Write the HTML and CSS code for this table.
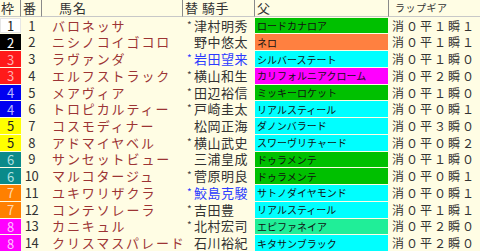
FILE: index.html
```html
<!DOCTYPE html>
<html lang="ja">
<head>
<meta charset="utf-8">
<link rel="stylesheet" href="styles.css">
</head>
<body>
<div class="table">
  <div class="row head">
    <div class="h waku-h">枠</div>
    <div class="h num-h">番</div>
    <div class="h name-h">馬名</div>
    <div class="h jockey-h">替&nbsp;騎手</div>
    <div class="h sire-h">父</div>
    <div class="h gear-h">ラップギア</div>
  </div>

  <div class="row">
    <div class="waku w1">1</div><div class="num">1</div><div class="name">バロネッサ</div>
    <div class="jockey"><span class="mark">*</span>津村明秀</div>
    <div class="sire s-green">ロードカナロア</div><div class="gear">消０平１瞬１</div>
  </div>
  <div class="row">
    <div class="waku w2">2</div><div class="num">2</div><div class="name">ニシノコイゴコロ</div>
    <div class="jockey"><span class="mark"></span>野中悠太</div>
    <div class="sire s-orange">ネロ</div><div class="gear">消０平１瞬１</div>
  </div>
  <div class="row">
    <div class="waku w3">3</div><div class="num">3</div><div class="name">ラヴァンダ</div>
    <div class="jockey blue"><span class="mark">*</span>岩田望来</div>
    <div class="sire s-cyan">シルバーステート</div><div class="gear">消０平１瞬０</div>
  </div>
  <div class="row">
    <div class="waku w3">3</div><div class="num">4</div><div class="name">エルフストラック</div>
    <div class="jockey"><span class="mark">*</span>横山和生</div>
    <div class="sire s-magenta">カリフォルニアクローム</div><div class="gear">消０平２瞬０</div>
  </div>
  <div class="row">
    <div class="waku w4">4</div><div class="num">5</div><div class="name">メアヴィア</div>
    <div class="jockey"><span class="mark">*</span>田辺裕信</div>
    <div class="sire s-green">ミッキーロケット</div><div class="gear">消０平１瞬０</div>
  </div>
  <div class="row">
    <div class="waku w4">4</div><div class="num">6</div><div class="name">トロピカルティー</div>
    <div class="jockey"><span class="mark">*</span>戸崎圭太</div>
    <div class="sire s-cyan">リアルスティール</div><div class="gear">消０平０瞬１</div>
  </div>
  <div class="row">
    <div class="waku w5">5</div><div class="num">7</div><div class="name">コスモディナー</div>
    <div class="jockey"><span class="mark"></span>松岡正海</div>
    <div class="sire s-cyan">ダノンバラード</div><div class="gear">消０平３瞬０</div>
  </div>
  <div class="row">
    <div class="waku w5">5</div><div class="num">8</div><div class="name">アドマイヤベル</div>
    <div class="jockey"><span class="mark">*</span>横山武史</div>
    <div class="sire s-cyan">スワーヴリチャード</div><div class="gear">消０平０瞬２</div>
  </div>
  <div class="row">
    <div class="waku w6">6</div><div class="num">9</div><div class="name">サンセットビュー</div>
    <div class="jockey"><span class="mark"></span>三浦皇成</div>
    <div class="sire s-green">ドゥラメンテ</div><div class="gear">消０平１瞬０</div>
  </div>
  <div class="row">
    <div class="waku w6">6</div><div class="num">10</div><div class="name">マルコタージュ</div>
    <div class="jockey"><span class="mark">*</span>菅原明良</div>
    <div class="sire s-green">ドゥラメンテ</div><div class="gear">消０平０瞬１</div>
  </div>
  <div class="row">
    <div class="waku w7">7</div><div class="num">11</div><div class="name">ユキワリザクラ</div>
    <div class="jockey blue"><span class="mark">*</span>鮫島克駿</div>
    <div class="sire s-cyan">サトノダイヤモンド</div><div class="gear">消０平０瞬１</div>
  </div>
  <div class="row">
    <div class="waku w7">7</div><div class="num">12</div><div class="name">コンテソレーラ</div>
    <div class="jockey"><span class="mark">*</span>吉田豊</div>
    <div class="sire s-cyan">リアルスティール</div><div class="gear">消０平１瞬１</div>
  </div>
  <div class="row">
    <div class="waku w8">8</div><div class="num">13</div><div class="name">カニキュル</div>
    <div class="jockey"><span class="mark">*</span>北村宏司</div>
    <div class="sire s-sea">エピファネイア</div><div class="gear">消０平２瞬０</div>
  </div>
  <div class="row">
    <div class="waku w8">8</div><div class="num">14</div><div class="name">クリスマスパレード</div>
    <div class="jockey"><span class="mark"></span>石川裕紀</div>
    <div class="sire s-cyan">キタサンブラック</div><div class="gear">消０平２瞬０</div>
  </div>
</div>
</body>
</html>
```

FILE: styles.css
```css
html, body {
  margin: 0;
  padding: 0;
  background: #fffde4;
}
body {
  width: 480px;
  height: 251px;
  overflow: hidden;
  font-family: "Noto Sans CJK JP", "Noto Sans", sans-serif;
  color: #333;
}
.table {
  display: grid;
  grid-template-columns: 21px 21px 141px 72px 134px 91px;
  grid-template-rows: repeat(15, 1fr);
  height: 251px;
  width: 480px;
}
.row {
  display: contents;
}
.row > div {
  display: flex;
  align-items: center;
  white-space: nowrap;
  line-height: 15px;
  min-width: 0;
}
.h {
  font-size: 13px;
  color: #333;
  border-right: 1px solid #8a8a8a;
  border-bottom: 1px solid #c8c8c8;
  padding-left: 1px;
}
.num-h { padding-left: 2px; }
.name-h { padding-left: 17px; letter-spacing: 1px; }
.jockey-h { padding-left: 2px; letter-spacing: 0.5px; }
.sire-h { padding-left: 2px; }
.gear-h { font-size: 10px; padding-left: 6px; border-right: none; letter-spacing: 0.5px; }

.waku {
  justify-content: center;
  font-size: 13px;
  border-top: 1px solid #fffde4;
}
.w1 { background: #fff; color: #222; box-shadow: inset 0 0 0 1px #e6e6e6; }
.w2 { background: #000; color: #fff; }
.w3 { background: #ff1a1a; color: #ffb0b0; }
.w4 { background: #0000f0; color: #b8b8ff; }
.w5 { background: #ffff00; color: #222; }
.w6 { background: #0a8a8a; color: #b0e0e0; }
.w7 { background: #ff8000; color: #ffd8b0; }
.w8 { background: #ff00ff; color: #ffc0ff; }

.num {
  justify-content: center;
  font-size: 13px;
  color: #333;
  letter-spacing: -0.5px;
}
.name {
  font-size: 13px;
  letter-spacing: 1.9px;
  color: #9c3434;
  padding-left: 10px;
}
.jockey {
  font-size: 13px;
  letter-spacing: 0.5px;
  color: #333;
  padding-left: 2px;
}
.jockey.blue { color: #2b3bff; }
.mark {
  display: inline-block;
  width: 9px;
  font-size: 10px;
  text-align: center;
  position: relative;
  top: -1px;
  color: #444;
}
.jockey.blue .mark { color: #2b3bff; }

.sire {
  font-size: 10px;
  color: #111;
  padding-left: 2px;
  border-top: 1px solid #fffde4;
  margin-right: 1px;
}
.s-green { background: #00c000; }
.s-orange { background: #ff8040; }
.s-cyan { background: #00ffff; }
.s-magenta { background: #ff00ff; }
.s-sea { background: #20ee98; }

.gear {
  font-size: 12px;
  letter-spacing: 2px;
  color: #333;
  padding-left: 3px;
}
```
